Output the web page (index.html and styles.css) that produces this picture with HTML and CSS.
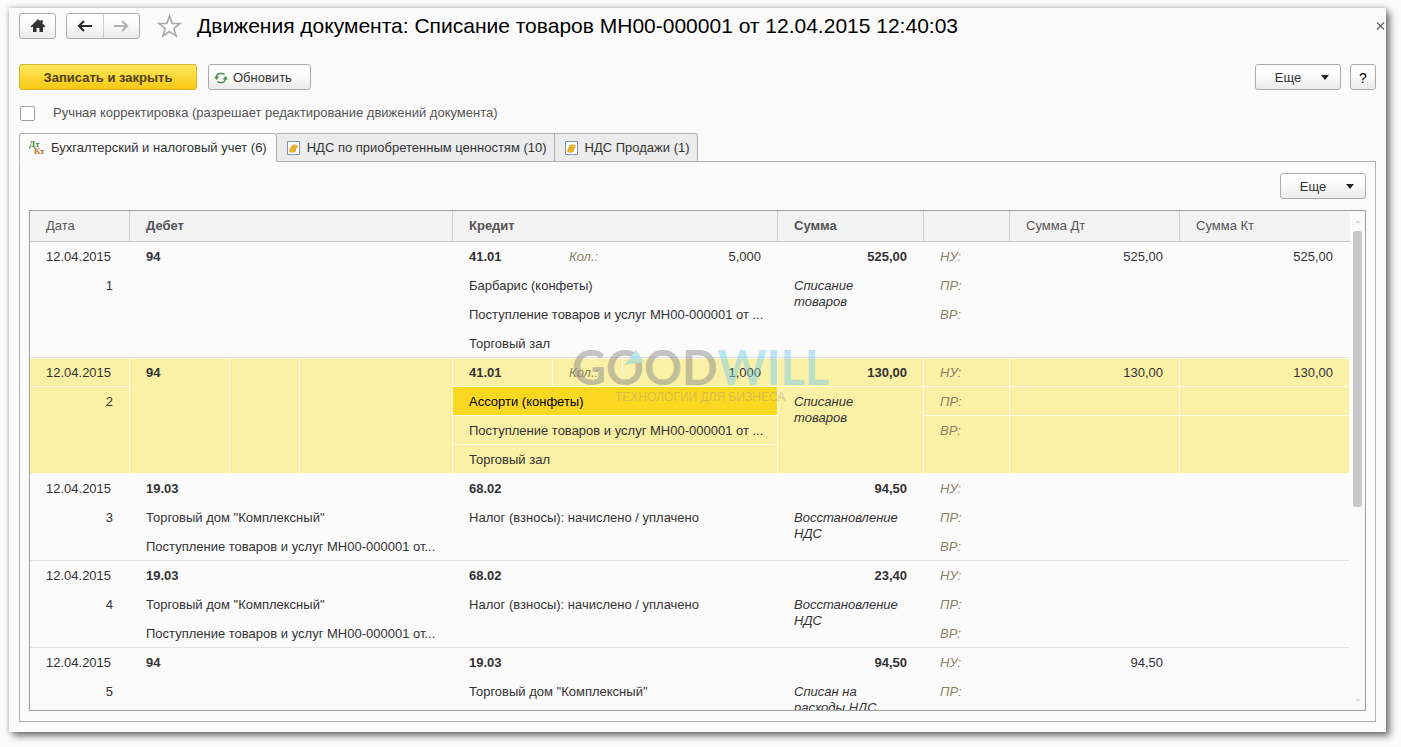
FILE: index.html
```html
<!DOCTYPE html>
<html lang="ru">
<head>
<meta charset="utf-8">
<title>Движения документа</title>
<link rel="stylesheet" href="styles.css">
</head>
<body>
<main class="window">
  <header class="titlebar">
    <button class="btn btn-icon" aria-label="Начальная страница">
      <svg width="16" height="14" viewBox="0 0 16 14"><path d="M8 0 0.500 7.500 1.800 8.600 3 7.500V13h3.600V9h2.800v4H13V7.500l1.200 1.100 1.300-1.100L12.600 4.600V1h-2v1.600z" fill="#333"/></svg>
    </button>
    <div class="nav">
      <button class="nav-btn" aria-label="Назад"><svg width="16" height="12" viewBox="0 0 16 12"><path d="M7 1 2 6l5 5M2 6h13" fill="none" stroke="#2b2b2b" stroke-width="2.200"/></svg></button>
      <button class="nav-btn" aria-label="Вперед"><svg width="16" height="12" viewBox="0 0 16 12"><path d="M9 1l5 5-5 5M14 6H1" fill="none" stroke="#b0b0b0" stroke-width="2.200"/></svg></button>
    </div>
    <button class="star" aria-label="В избранное"><svg width="25" height="24" viewBox="0 0 25 24"><path d="M12.500 2l2.700 7.300 7.800.3-6.100 4.800 2.100 7.500-6.500-4.300L6 21.900l2.100-7.500L2 9.600l7.800-.3z" fill="#fff" stroke="#aaa" stroke-width="1.700"/></svg></button>
    <h1>Движения документа: Списание товаров МН00-000001 от 12.04.2015 12:40:03</h1>
    <button class="close" aria-label="Закрыть"><svg width="9" height="8" viewBox="0 0 9 8"><path d="M1 .5l7 7M8 .5l-7 7" stroke="#666" stroke-width="1.300"/></svg></button>
  </header>

  <div class="commands">
    <button class="btn btn-primary">Записать и закрыть</button>
    <button class="btn btn-refresh">
      <svg width="14" height="12" viewBox="0 0 14 12"><g fill="none" stroke="#4b9150" stroke-width="1.500"><path d="M2.500 6V5a4 4 0 0 1 4-3.500h2.200a3 3 0 0 1 1.800 1M11.500 6v1a4 4 0 0 1-4 3.500H5.300a3 3 0 0 1-1.800-1"/></g><path d="M0 4.500h5.200L2.600 8zM8.800 7.500H14L11.400 4z" fill="#4b9150"/></svg>
      Обновить
    </button>
    <button class="btn btn-more push">Еще <span class="caret"></span></button>
    <button class="btn btn-help">?</button>
  </div>

  <label class="manual"><input type="checkbox"> Ручная корректировка (разрешает редактирование движений документа)</label>

  <div class="tabs" role="tablist">
    <button class="tab active" role="tab" aria-selected="true">
      <svg width="17" height="17" viewBox="0 0 17 17" font-family="Liberation Serif, serif" font-weight="bold" font-size="9"><text x="0" y="8" fill="#3f8a34">Дт</text><text x="5" y="15" fill="#b9762c">Кт</text></svg>
      Бухгалтерский и налоговый учет (6)
    </button>
    <button class="tab" role="tab">
      <svg width="13" height="14" viewBox="0 0 13 14"><path d="M.5.5h12v13H.5z" fill="#fff" stroke="#7f93ab"/><g fill="#f2bd35" stroke="#c98f1a" stroke-width=".6"><ellipse cx="5.500" cy="9.800" rx="3.200" ry="1.500"/><ellipse cx="6" cy="7.700" rx="3.200" ry="1.500"/><ellipse cx="7.500" cy="5.300" rx="3" ry="1.500"/></g></svg>
      НДС по приобретенным ценностям (10)
    </button>
    <button class="tab" role="tab">
      <svg width="13" height="14" viewBox="0 0 13 14"><path d="M.5.5h12v13H.5z" fill="#fff" stroke="#7f93ab"/><g fill="#f2bd35" stroke="#c98f1a" stroke-width=".6"><ellipse cx="5.500" cy="9.800" rx="3.200" ry="1.500"/><ellipse cx="6" cy="7.700" rx="3.200" ry="1.500"/><ellipse cx="7.500" cy="5.300" rx="3" ry="1.500"/></g></svg>
      НДС Продажи (1)
    </button>
  </div>

  <section class="panel">
    <div class="panel-tools"><button class="btn btn-more">Еще <span class="caret"></span></button></div>
    <div class="grid">
      <div class="grid-body">
        <table>
          <colgroup><col class="w100"><col class="w100"><col class="w70"><col class="w153"><col class="w100"><col class="w70"><col class="w155"><col class="w146"><col class="w86"><col class="w170"><col class="w170"></colgroup>
          <thead>
            <tr><th>Дата</th><th colspan="3" class="b">Дебет</th><th colspan="3" class="b">Кредит</th><th class="b">Сумма</th><th></th><th>Сумма Дт</th><th>Сумма Кт</th></tr>
          </thead>
          <tbody>
            <tr><td class="r date">12.04.2015</td><td rowspan="4" class="b end">94</td><td rowspan="4" class="end"></td><td rowspan="4" class="end"></td><td class="b">41.01</td><td class="k">Кол.:</td><td class="r">5,000</td><td class="r b">525,00</td><td class="k">НУ:</td><td class="r">525,00</td><td class="r">525,00</td></tr>
            <tr><td rowspan="3" class="r end">1</td><td colspan="3">Барбарис (конфеты)</td><td rowspan="3" class="i end">Списание товаров</td><td class="k">ПР:</td><td></td><td></td></tr>
            <tr><td colspan="3">Поступление товаров и услуг МН00-000001 от ...</td><td rowspan="2" class="k end">ВР:</td><td rowspan="2" class="end"></td><td rowspan="2" class="end"></td></tr>
            <tr><td colspan="3" class="end">Торговый зал</td></tr>
          </tbody>
          <tbody class="selected">
            <tr><td class="r date">12.04.2015</td><td rowspan="4" class="b end">94</td><td rowspan="4" class="end"></td><td rowspan="4" class="end"></td><td class="b">41.01</td><td class="k">Кол.:</td><td class="r">1,000</td><td class="r b">130,00</td><td class="k">НУ:</td><td class="r">130,00</td><td class="r">130,00</td></tr>
            <tr><td rowspan="3" class="r end">2</td><td colspan="3" class="current">Ассорти (конфеты)</td><td rowspan="3" class="i end">Списание товаров</td><td class="k">ПР:</td><td></td><td></td></tr>
            <tr><td colspan="3">Поступление товаров и услуг МН00-000001 от ...</td><td rowspan="2" class="k end">ВР:</td><td rowspan="2" class="end"></td><td rowspan="2" class="end"></td></tr>
            <tr><td colspan="3" class="end">Торговый зал</td></tr>
          </tbody>
          <tbody>
            <tr><td class="r date">12.04.2015</td><td colspan="3" class="b">19.03</td><td colspan="3" class="b">68.02</td><td class="r b">94,50</td><td class="k">НУ:</td><td></td><td></td></tr>
            <tr><td rowspan="2" class="r end">3</td><td colspan="3">Торговый дом "Комплексный"</td><td rowspan="2" colspan="3" class="end">Налог (взносы): начислено / уплачено</td><td rowspan="2" class="i end">Восстановление НДС</td><td class="k">ПР:</td><td></td><td></td></tr>
            <tr><td colspan="3" class="end">Поступление товаров и услуг МН00-000001 от...</td><td class="k end">ВР:</td><td class="end"></td><td class="end"></td></tr>
          </tbody>
          <tbody>
            <tr><td class="r date">12.04.2015</td><td colspan="3" class="b">19.03</td><td colspan="3" class="b">68.02</td><td class="r b">23,40</td><td class="k">НУ:</td><td></td><td></td></tr>
            <tr><td rowspan="2" class="r end">4</td><td colspan="3">Торговый дом "Комплексный"</td><td rowspan="2" colspan="3" class="end">Налог (взносы): начислено / уплачено</td><td rowspan="2" class="i end">Восстановление НДС</td><td class="k">ПР:</td><td></td><td></td></tr>
            <tr><td colspan="3" class="end">Поступление товаров и услуг МН00-000001 от...</td><td class="k end">ВР:</td><td class="end"></td><td class="end"></td></tr>
          </tbody>
          <tbody>
            <tr><td class="r date">12.04.2015</td><td colspan="3" class="b">94</td><td colspan="3" class="b">19.03</td><td class="r b">94,50</td><td class="k">НУ:</td><td class="r">94,50</td><td></td></tr>
            <tr><td class="r">5</td><td colspan="3"></td><td colspan="3">Торговый дом "Комплексный"</td><td class="i">Списан на расходы НДС</td><td class="k">ПР:</td><td></td><td></td></tr>
          </tbody>
        </table>
      </div>
      <div class="scroll">
        <span class="scroll-up"></span>
        <div class="track"><div class="thumb"></div></div>
        <span class="scroll-down"></span>
      </div>
      <svg class="watermark" width="280" height="60" viewBox="0 0 280 60">
        <text x="0" y="37" class="wm-name"><tspan fill="#8c8c8c">GOOD</tspan><tspan fill="#7fd0e8">WILL</tspan></text>
        <path d="M52 17 64 2l8 12z" fill="#7fd0e8"/>
        <text x="43" y="53" class="wm-sub">ТЕХНОЛОГИИ ДЛЯ БИЗНЕСА</text>
      </svg>
    </div>
  </section>
</main>
</body>
</html>
```
FILE: styles.css
```css
* { box-sizing: border-box; }

body {
  margin: 0;
  height: 100vh;
  padding: 8px 15px 15px 9px;
  background: #fbfbfb;
  font: 13px/16px "Liberation Sans", Arial, sans-serif;
  color: #333;
}

button { font: inherit; color: inherit; padding: 0; }
svg { flex: none; }

.window {
  position: relative;
  display: flex;
  flex-direction: column;
  height: 100%;
  padding: 5px 10px 10px;
  background: #fbfbfb;
  box-shadow: 4px 4px 7px rgba(0, 0, 0, .5), 0 0 5px rgba(0, 0, 0, .25);
}

.titlebar { display: flex; align-items: center; height: 26px; }

.btn {
  display: flex;
  align-items: center;
  justify-content: center;
  height: 26px;
  border: 1px solid #ababab;
  border-radius: 3px;
  background: linear-gradient(#fff 30%, #ebebeb);
}
.btn-icon { width: 37px; }

.nav {
  display: flex;
  width: 74px;
  height: 26px;
  margin-left: 10px;
  border: 1px solid #ababab;
  border-radius: 3px;
  background: linear-gradient(#fff 30%, #ebebeb);
}
.nav-btn {
  flex: 1;
  display: flex;
  align-items: center;
  justify-content: center;
  border: 0;
  background: none;
}
.nav-btn + .nav-btn { border-left: 1px solid #ccc; }

.star { display: flex; margin-left: 17px; border: 0; background: none; }

h1 {
  margin: 0 0 0 15px;
  font-size: 21px;
  line-height: 26px;
  font-weight: normal;
  color: #000;
  white-space: nowrap;
}

.close {
  position: absolute;
  top: 14px;
  right: 1px;
  display: flex;
  border: 0;
  background: none;
}

.commands { display: flex; margin-top: 25px; }
.commands .btn, .panel-tools .btn { padding-top: 1px; }
.btn-primary {
  width: 178px;
  border-color: #d5b32c;
  background: linear-gradient(#ffe85e, #f8c913);
  font-weight: bold;
  color: #4f4210;
}
.btn-refresh {
  justify-content: flex-start;
  gap: 5px;
  width: 103px;
  margin-left: 11px;
  padding-left: 5px;
}
.btn-more { gap: 20px; width: 86px; padding-left: 8px; }
.push { margin-left: auto; }
.btn-help { width: 26px; margin-left: 9px; color: #000; font-size: 14px; }
.caret {
  border: 4px solid transparent;
  border-top: 5px solid #222;
  border-bottom: 0;
}

.manual {
  display: flex;
  align-items: center;
  gap: 18px;
  height: 16px;
  margin-top: 15px;
  color: #555;
}
.manual input {
  appearance: none;
  width: 15px;
  height: 15px;
  margin: 0 0 0 1px;
  border: 1px solid #a0a0a0;
  border-radius: 2px;
  background: #fff;
}

.tabs { display: flex; margin-top: 12px; }
.tab {
  display: flex;
  align-items: center;
  gap: 7px;
  height: 29px;
  margin-bottom: -1px;
  padding: 0 7px 0 10px;
  border: 1px solid #b0b0b0;
  border-left: 0;
  background: #ececec;
  white-space: nowrap;
}
.tab.active {
  position: relative;
  gap: 5px;
  padding: 0 9px;
  border-left: 1px solid #b0b0b0;
  border-bottom-color: #fbfbfb;
  border-radius: 3px 3px 0 0;
  background: #fbfbfb;
}
.tab:last-child { border-radius: 0 3px 0 0; }

.panel {
  flex: 1;
  display: flex;
  flex-direction: column;
  min-height: 0;
  padding: 11px 9px 10px;
  border: 1px solid #b0b0b0;
}
.panel-tools { display: flex; justify-content: flex-end; }

.grid {
  position: relative;
  flex: 1;
  display: flex;
  min-height: 0;
  margin-top: 11px;
  border: 1px solid #a0a0a0;
}
.grid-body { flex: 1; min-width: 0; overflow: hidden; }

table { width: 100%; table-layout: fixed; border-spacing: 0; }
.w70 { width: 70px; }
.w86 { width: 86px; }
.w100 { width: 100px; }
.w146 { width: 146px; }
.w153 { width: 153px; }
.w155 { width: 155px; }
.w170 { width: 170px; }

th {
  height: 31px;
  padding: 0 16px;
  border-right: 1px solid #d0d0d0;
  border-bottom: 1px solid #c8c8c8;
  background: #f3f3f3;
  text-align: left;
  font-weight: normal;
  color: #555;
}
th:last-child { border-right: 0; }
td {
  height: 29px;
  padding: 7px 15px 5px 16px;
  border-right: 1px solid transparent;
  border-bottom: 1px solid transparent;
  vertical-align: top;
  white-space: nowrap;
}
th.b, td.b { font-weight: bold; }
.r { padding-right: 16px; text-align: right; }
.date { padding-right: 18px; }
.i { font-style: italic; white-space: normal; }
.k { font-style: italic; color: #8a8265; }
.end { border-bottom-color: #e4e4e4; }

.selected td {
  border-right-color: #fdfbe4;
  border-bottom-color: #fdfbe4;
  background: #faf1a6;
  background-clip: padding-box;
}
.selected tr:first-child td { border-top: 1px solid #fdfbe4; padding-top: 6px; }
.selected .current { background: #fad820; background-clip: padding-box; color: #000; }

.scroll {
  display: flex;
  flex-direction: column;
  align-items: center;
  width: 15px;
  padding: 9px 0 8px;
}
.scroll-up, .scroll-down { border: 3px solid transparent; }
.scroll-up { border-top: 0; border-bottom-color: #ddd; }
.scroll-down { border-bottom: 0; border-top-color: #ddd; }
.track { flex: 1; width: 9px; padding: 8px 0; }
.thumb { height: 60%; border-radius: 3px; background: #c8c8c8; }

.watermark {
  position: absolute;
  top: 137px;
  left: 542px;
  opacity: .5;
  pointer-events: none;
}
.wm-name { font: bold 47px Lato, sans-serif; }
.wm-sub { font: 12px "Liberation Sans", Arial, sans-serif; fill: #b5a878; }
```
